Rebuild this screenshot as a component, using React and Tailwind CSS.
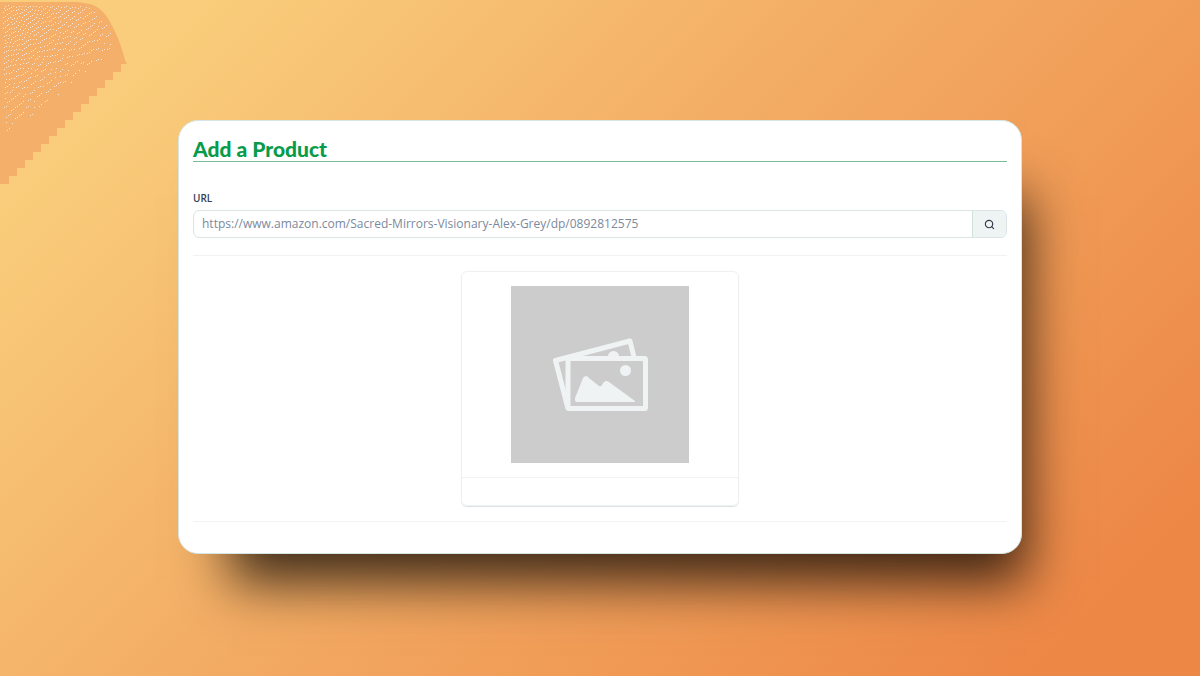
import React, { useState } from 'react';
import { Search } from 'lucide-react';

// light speckles, thinning out away from the top left corner
function speckles() {
  const w = 113;
  const rows = Array.from({ length: 140 }, () => new Array(w + 2).fill(0));
  let d = '';
  for (let y = 4; y < 138; y += 1) {
    for (let x = 2; x < w; x += 1) {
      const fade = 1 - (x * 0.8 + y) / 141;
      if (fade <= 0 || y < (x - 90) * 1.1 + 4) continue;
      const value = 0.03 + fade * 0.09 + rows[y][x];
      const on = value > 0.4 + ((x * 7 + y * 13) % 11) / 30;
      if (on) d += `M${x} ${y}h1v1h-1z`;
      // error diffusion keeps the dots evenly apart
      const err = on ? value - 1 : value;
      rows[y][x + 1] += (err * 7) / 16;
      rows[y + 1][x - 1] += (err * 3) / 16;
      rows[y + 1][x] += (err * 5) / 16;
      rows[y + 1][x + 1] += err / 16;
    }
  }
  return d;
}

function staircase() {
  let d = 'M0 2H77L90 4C100 7 105 13 110 22C118 36 122 48 125 60L127 64';
  for (let x = 121, y = 64; x >= 9; x -= 8, y += 8) d += `H${x}V${y + 8}`;
  return d + 'H2V184H0Z';
}

function CornerPatch() {
  return (
    <svg width="128" height="192" className="absolute left-0 top-0" aria-hidden="true">
      <path d={staircase()} fill="#f4b06b" />
      <path d={speckles()} fill="#f1e7dc" shapeRendering="crispEdges" />
    </svg>
  );
}

function PlaceholderImage() {
  return (
    <svg viewBox="0 0 178 177" className="w-[178px] bg-[#cccccc]" role="img" aria-label="No product image">
      <g fill="none" stroke="#eff3f4" strokeWidth="5" strokeLinejoin="round">
        <path d="M57 122.500L44.500 74.500L119 55L123 71" />
        <rect x="57" y="72.500" width="77.500" height="50" rx="1" />
      </g>
      <g fill="#eff3f4">
        <path d="M97 70.500a5.500 5.500 0 0 1 11 0z" />
        <circle cx="114.500" cy="84.500" r="5.500" />
        <path d="M64 112L72 92Q75 88 78 92L88 100Q90 101 91 99Q94 93 98 96L124 115V116H66Q64 116 64 114z" />
      </g>
    </svg>
  );
}

export default function App() {
  const [url, setUrl] = useState('');

  return (
    <div className="relative flex min-h-screen items-center overflow-hidden bg-[linear-gradient(135deg,#f9cd7b_11%,#f3ac64_46%,#ed8746_91%)] px-[178px] pb-0.5 font-['Open_Sans',sans-serif]">
      <CornerPatch />

      <main className="relative w-full rounded-[20px] border border-[#d5e5e3] bg-white px-3.5 pt-4 pb-[31px] shadow-[28px_52px_50px_-24px_rgba(0,0,0,0.75)]">
        <h1 className="border-b border-[#78bd96] font-['Lato',sans-serif] text-[21px] leading-6 font-black text-[#079c4b]">Add a Product</h1>

        <form className="pt-7" onSubmit={(e) => e.preventDefault()}>
          <label htmlFor="url" className="block text-[10px] leading-4 font-semibold text-[#374151]">URL</label>
          <div className="mt-1 flex h-7 overflow-hidden rounded-md border border-[#dce4e6]">
            <input
              id="url"
              type="url"
              value={url}
              onChange={(e) => setUrl(e.target.value)}
              placeholder="https://www.amazon.com/Sacred-Mirrors-Visionary-Alex-Grey/dp/0892812575"
              className="min-w-0 flex-1 px-2 text-xs text-[#374151] outline-none placeholder:text-[#7b8a9d]"
            />
            <button type="submit" aria-label="Search" className="flex w-[34px] items-center justify-center border-l border-[#cfe2dc] bg-[#eef3f4] text-[#303b48]">
              <Search size={11} strokeWidth={2.5} />
            </button>
          </div>
        </form>

        <hr className="mt-[17px] border-[#f0f2f3]" />

        <section className="mx-auto mt-[15px] w-[278px] rounded-md border border-[#eef1f2] shadow-[0_1px_1px_#dde2e4]">
          <div className="flex justify-center py-3.5">
            <PlaceholderImage />
          </div>
          <div className="h-7 border-t border-[#f2f4f4]" />
        </section>

        <hr className="mt-[15px] border-[#f0f2f3]" />
      </main>
    </div>
  );
}
